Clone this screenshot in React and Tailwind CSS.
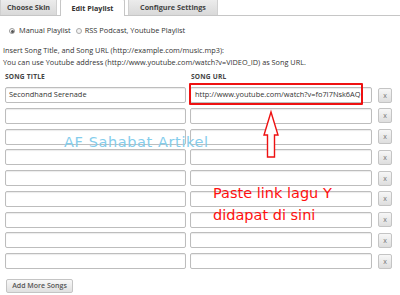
const rows = [
  { title: 'Secondhand Serenade', url: 'http://www.youtube.com/watch?v=fo7I7Nsk6AQ' },
  { title: '', url: '' },
  { title: '', url: '' },
  { title: '', url: '' },
  { title: '', url: '' },
  { title: '', url: '' },
  { title: '', url: '' },
  { title: '', url: '' },
  { title: '', url: '' },
];

function Tab({ label, active, width }) {
  if (active) {
    return (
      <div
        className={`${width} h-[17px] -mb-px bg-white border border-b-0 border-[#c6c6c6] rounded-t-[2px] flex items-center justify-center font-bold text-[7.2px] text-[#333] whitespace-nowrap`}
      >
        {label}
      </div>
    );
  }
  return (
    <div
      className={`${width} h-[16px] bg-gradient-to-b from-[#ececec] to-[#d9d9d9] border border-b-0 border-[#d0d0d0] flex items-center justify-center font-bold text-[7.2px] text-[#444] whitespace-nowrap`}
    >
      {label}
    </div>
  );
}

function SongRow({ title, url }) {
  return (
    <div className="flex items-center h-[16px]">
      <div className="w-[181px] h-[16px] ml-[5px] border border-[#bdbdbd] rounded-[2px] shadow-[inset_0_1px_1px_rgba(0,0,0,0.08)] flex items-center px-[3px] text-[7.4px] text-[#333] whitespace-nowrap overflow-hidden">
        {title}
      </div>
      <div className="w-[182px] h-[16px] ml-[4px] border border-[#bdbdbd] rounded-[2px] shadow-[inset_0_1px_1px_rgba(0,0,0,0.08)] flex items-center px-[4px] text-[7.4px] text-[#333] whitespace-nowrap overflow-hidden">
        {url}
      </div>
      <div className="w-[14px] h-[15px] ml-[6px] border border-[#c4c4c4] rounded-[2px] bg-gradient-to-b from-[#f7f7f7] to-[#dedede] flex items-center justify-center text-[7px] text-[#777] leading-none">
        x
      </div>
    </div>
  );
}

export default function App() {
  return (
    <div className="relative w-[400px] h-[295px] overflow-hidden bg-white font-['Open_Sans',sans-serif] text-[#333]">
      <div className="flex items-end h-[16px] border-b border-[#c6c6c6]">
        <Tab label="Choose Skin" width="w-[57px]" />
        <div className="w-[3px]" />
        <Tab label="Edit Playlist" active width="w-[65px]" />
        <div className="w-[3px]" />
        <Tab label="Configure Settings" width="w-[90px]" />
      </div>

      <div className="flex items-center h-[12px] mt-[9px] ml-[9px] text-[7.4px] whitespace-nowrap">
        <span className="w-[6px] h-[6px] rounded-full border border-[#999] bg-white flex items-center justify-center">
          <span className="w-[3px] h-[3px] rounded-full bg-[#555]" />
        </span>
        <span className="ml-[4px]">Manual Playlist</span>
        <span className="ml-[5px] w-[6px] h-[6px] rounded-full border border-[#aaa] bg-[#f4f4f4]" />
        <span className="ml-[3px]">RSS Podcast, Youtube Playlist</span>
      </div>

      <div className="mt-[7px] ml-[3px] text-[7.3px] leading-[12px] whitespace-nowrap">
        <p>Insert Song Title, and Song URL (http://example.com/music.mp3):</p>
        <p>You can use Youtube address (http://www.youtube.com/watch?v=VIDEO_ID) as Song URL.</p>
      </div>

      <div className="flex h-[12px] mt-[3px] items-center text-[6.6px] font-bold text-[#444] tracking-[0.2px]">
        <span className="ml-[5px] w-[186px]">SONG TITLE</span>
        <span>SONG URL</span>
      </div>

      <div className="flex flex-col gap-[4.75px] mt-[4px]">
        {rows.map((r, i) => (
          <SongRow key={i} title={r.title} url={r.url} />
        ))}
      </div>

      <div className="mt-[10px] ml-[6px] w-[67px] h-[14px] border border-[#c4c4c4] rounded-[2px] bg-gradient-to-b from-[#f8f8f8] to-[#e0e0e0] flex items-center justify-center text-[7px] font-semibold text-[#555] whitespace-nowrap">
        Add More Songs
      </div>

      {/* annotations drawn over the screenshot */}
      <div className="absolute left-[189px] top-[83px] w-[174px] h-[22px] border-2 border-[#ee1111] rounded-[1px]" />

      <svg className="absolute left-0 top-0" width="400" height="295" viewBox="0 0 400 295">
        <path
          d="M271 112 L278 135 L274.5 135 L274.5 157 L267.5 157 L267.5 135 L264 135 Z"
          fill="#fff"
          stroke="#ee1111"
          strokeWidth="1.4"
          strokeLinejoin="miter"
        />
      </svg>

      <div className="absolute left-[64px] top-[132px] text-[14.5px] leading-[20px] tracking-[0.6px] text-[#84cdec] font-['DejaVu_Sans',sans-serif] whitespace-nowrap">
        AF Sahabat Artikel
      </div>

      <div className="absolute left-[213px] top-[182px] text-[14.5px] leading-[22px] text-[#ff1010] font-['DejaVu_Sans',sans-serif] whitespace-nowrap">
        <div>Paste link lagu Y</div>
        <div>didapat di sini</div>
      </div>
    </div>
  );
}
